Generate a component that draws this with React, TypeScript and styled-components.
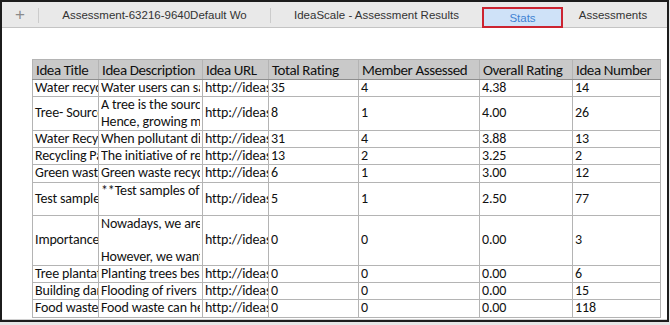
import React from 'react';
import styled, { createGlobalStyle } from 'styled-components';

const GlobalStyle = createGlobalStyle`
  html, body {
    margin: 0;
    padding: 0;
    background: #e6e6e6;
  }
`;

type Row = {
  title: string;
  desc: string[];
  url: string;
  total: string;
  member: string;
  overall: string;
  num: string;
};

const rows: Row[] = [
  { title: 'Water recycling', desc: ['Water users can save'], url: 'http://ideascale', total: '35', member: '4', overall: '4.38', num: '14' },
  { title: 'Tree- Source', desc: ['A tree is the source', 'Hence, growing more'], url: 'http://ideascale', total: '8', member: '1', overall: '4.00', num: '26' },
  { title: 'Water Recycling', desc: ['When pollutant discharge'], url: 'http://ideascale', total: '31', member: '4', overall: '3.88', num: '13' },
  { title: 'Recycling Paper', desc: ['The initiative of recycling'], url: 'http://ideascale', total: '13', member: '2', overall: '3.25', num: '2' },
  { title: 'Green waste', desc: ['Green waste recycling'], url: 'http://ideascale', total: '6', member: '1', overall: '3.00', num: '12' },
  { title: 'Test samples', desc: ['**Test samples of', ''], url: 'http://ideascale', total: '5', member: '1', overall: '2.50', num: '77' },
  { title: 'Importance of', desc: ['Nowadays, we are', '', 'However, we want'], url: 'http://ideascale', total: '0', member: '0', overall: '0.00', num: '3' },
  { title: 'Tree plantation', desc: ['Planting trees besides'], url: 'http://ideascale', total: '0', member: '0', overall: '0.00', num: '6' },
  { title: 'Building dams', desc: ['Flooding of rivers'], url: 'http://ideascale', total: '0', member: '0', overall: '0.00', num: '15' },
  { title: 'Food waste', desc: ['Food waste can help'], url: 'http://ideascale', total: '0', member: '0', overall: '0.00', num: '118' },
];

const columns = [
  { label: 'Idea Title', width: 66 },
  { label: 'Idea Description', width: 104 },
  { label: 'Idea URL', width: 66 },
  { label: 'Total Rating', width: 90 },
  { label: 'Member Assessed', width: 121 },
  { label: 'Overall Rating', width: 93 },
  { label: 'Idea Number', width: 88 },
];

const App = () => {
  return (
    <>
      <GlobalStyle />
      <Window>
        <TabBar>
          <PlusTab>+</PlusTab>
          <Divider />
          <Tab $width={231}>Assessment-63216-9640Default Wo</Tab>
          <Divider />
          <Tab $width={211}>IdeaScale - Assessment Results</Tab>
          <ActiveTab>Stats</ActiveTab>
          <Tab $width={100}>Assessments</Tab>
        </TabBar>
        <Sheet>
          <StatsTable>
            <colgroup>
              {columns.map((c) => (
                <col key={c.label} style={{ width: c.width }} />
              ))}
            </colgroup>
            <thead>
              <tr>
                {columns.map((c) => (
                  <HeadCell key={c.label}>{c.label}</HeadCell>
                ))}
              </tr>
            </thead>
            <tbody>
              {rows.map((r) => (
                <tr key={r.num}>
                  <Cell>{r.title}</Cell>
                  <Cell>
                    {r.desc.map((line, i) => (
                      <Line key={i}>{line || '\u00a0'}</Line>
                    ))}
                  </Cell>
                  <Cell>{r.url}</Cell>
                  <Cell>{r.total}</Cell>
                  <Cell>{r.member}</Cell>
                  <Cell>{r.overall}</Cell>
                  <Cell>{r.num}</Cell>
                </tr>
              ))}
            </tbody>
          </StatsTable>
        </Sheet>
      </Window>
    </>
  );
};

export default App;

const Window = styled.div`
  width: 669px;
  height: 322px;
  box-sizing: border-box;
  border: 2px solid #1c1c1c;
  background: #ffffff;
  display: flex;
  flex-direction: column;
  overflow: hidden;
`;

const TabBar = styled.div`
  height: 25px;
  flex: none;
  display: flex;
  align-items: stretch;
  background: #e9e9e9;
  border-bottom: 1px solid #c4c4c4;
  font-family: 'Liberation Sans', Arial, sans-serif;
  font-size: 11.5px;
  color: #333333;
`;

const PlusTab = styled.div`
  width: 36px;
  display: flex;
  align-items: center;
  justify-content: center;
  font-size: 17px;
  font-weight: 300;
  color: #8a8a8a;
`;

const Divider = styled.div`
  width: 1px;
  margin: 6px 0 4px;
  background: #cccccc;
`;

const Tab = styled.div<{ $width: number }>`
  width: ${(p) => p.$width}px;
  display: flex;
  align-items: center;
  justify-content: center;
  white-space: nowrap;
  overflow: hidden;
`;

const ActiveTab = styled.div`
  width: 77px;
  margin-top: 5px;
  margin-bottom: -1px;
  display: flex;
  align-items: center;
  justify-content: center;
  background: #cfe2f8;
  border: 2px solid #cc2431;
  color: #3f82d4;
`;

const Sheet = styled.div`
  flex: 1;
  padding: 31px 0 0 30px;
  border-bottom: 1px solid #d0d0d0;
`;

const StatsTable = styled.table`
  table-layout: fixed;
  border-collapse: collapse;
  width: 628px;
  font-family: Carlito, Lato, 'Open Sans', sans-serif;
  color: #111111;
`;

const HeadCell = styled.th`
  height: 19px;
  padding: 0 3px;
  background: #c9c9c9;
  border: 1px solid #b4b4b4;
  border-bottom: 1px solid #8e8e8e;
  font-size: 15px;
  letter-spacing: -0.4px;
  font-weight: 400;
  text-align: left;
  white-space: nowrap;
  overflow: hidden;
`;

const Cell = styled.td`
  padding: 0 2px;
  border: 1px solid #b4b4b4;
  font-size: 14px;
  letter-spacing: -0.15px;
  line-height: 16.25px;
  vertical-align: middle;
  white-space: nowrap;
  overflow: hidden;
  text-overflow: clip;
`;

const Line = styled.div`
  white-space: pre;
  overflow: hidden;
`;
